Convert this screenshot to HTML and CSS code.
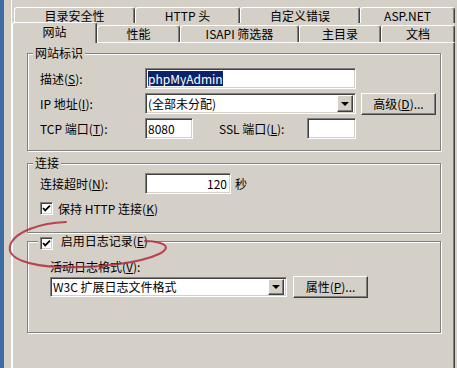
FILE: index.html
```html
<!DOCTYPE html>
<html lang="zh-CN">
<head>
  <meta charset="UTF-8" />
  <title>网站属性</title>
  <link rel="stylesheet" href="styles.css">
</head>
<body>

  <div class="edge"></div>

  <div class="dialog">
    <!-- back row of tabs -->
    <div class="tabs tabs-back">
      <div class="tab t-security">目录安全性</div>
      <div class="tab t-http">HTTP 头</div>
      <div class="tab t-errors">自定义错误</div>
      <div class="tab t-asp">ASP.NET</div>
    </div>

    <!-- front row of tabs -->
    <div class="tabs tabs-front">
      <div class="tab active t-site">网站</div>
      <div class="tab t-perf">性能</div>
      <div class="tab t-isapi">ISAPI 筛选器</div>
      <div class="tab t-home">主目录</div>
      <div class="tab t-docs">文档</div>
    </div>

    <div class="panel">

      <fieldset class="group g-site">
        <legend class="legend-text">网站标识</legend>
        <div class="row">
          <span class="lbl">描述(<u>S</u>):</span>
          <div class="field w-desc"><span class="sel">phpMyAdmin</span></div>
        </div>
        <div class="row">
          <span class="lbl">IP 地址(<u>I</u>):</span>
          <div class="field select w-desc">
            <span>(全部未分配)</span>
            <span class="dd"></span>
          </div>
          <div class="btn w-btn ml5">高级(<u>D</u>)...</div>
        </div>
        <div class="row">
          <span class="lbl">TCP 端口(<u>T</u>):</span>
          <div class="field w-tcp">8080</div>
          <span class="lbl-ssl">SSL 端口(<u>L</u>):</span>
          <div class="field w-ssl"></div>
        </div>
      </fieldset>

      <fieldset class="group g-conn">
        <legend class="legend-text">连接</legend>
        <div class="row">
          <span class="lbl">连接超时(<u>N</u>):</span>
          <div class="field num w-timeout">120</div>
          <span class="unit">秒</span>
        </div>
        <div class="row">
          <span class="check"><svg width="9" height="9" viewBox="0 0 9 9"><path d="M1 4 L3.2 6.4 L8 1.6" fill="none" stroke="#000" stroke-width="1.7"/></svg></span>
          <span class="check-text">保持 HTTP 连接(<u>K</u>)</span>
        </div>
      </fieldset>

      <fieldset class="group g-log">
        <legend class="legend-check">
          <span class="check"><svg width="9" height="9" viewBox="0 0 9 9"><path d="M1 4 L3.2 6.4 L8 1.6" fill="none" stroke="#000" stroke-width="1.7"/></svg></span>
          <span class="check-text">启用日志记录(<u>E</u>)</span>
        </legend>
        <div class="log-label">活动日志格式(<u>V</u>):</div>
        <div class="log-row">
          <div class="field select w-format">
            <span>W3C 扩展日志文件格式</span>
            <span class="dd"></span>
          </div>
          <div class="btn w-btn">属性(<u>P</u>)...</div>
        </div>
      </fieldset>

    </div>
  </div>

  <!-- hand-drawn red circle over the screenshot -->
  <svg class="mark" width="457" height="368" viewBox="0 0 457 368">
    <path d="M66 222 C42 223 14 231 10 246 C7 259 30 266 60 267 C100 268 140 263 159 254 C171 248 168 242 145 241"
          fill="none" stroke="#b42a3a" stroke-width="2" stroke-linecap="round" opacity="0.85"/>
  </svg>

</body>
</html>
```

FILE: styles.css
```css
* { box-sizing: border-box; }

body {
  margin: 0;
  height: 368px;
  overflow: hidden;
  display: flex;
  background: #d4d0c8;
  color: #000;
  font-family: "Noto Sans CJK SC", "Liberation Sans", sans-serif;
  font-size: 12px;
}

u { text-decoration: underline; text-underline-offset: 1px; }

.edge {
  width: 4px;
  margin-right: 7px;
  background: #3d6ca4;
  flex: none;
}

.dialog {
  flex: 1;
  min-width: 0;
  display: flex;
  flex-direction: column;
  padding-top: 7px;
  border-left: 1px solid #fff;
}

/* tabs */
.tabs { display: flex; flex: none; }

.tabs-back {
  height: 16px;
  padding-left: 2px;
}

.tabs-front {
  height: 20px;
  margin-top: -1px;
  align-items: flex-end;
}

.tab {
  height: 16px;
  display: flex;
  align-items: center;
  justify-content: center;
  line-height: 14px;
  background: #d4d0c8;
  border-top: 1px solid #fff;
  border-left: 1px solid #fff;
  border-right: 1px solid #404040;
  border-radius: 3px 3px 0 0;
  box-shadow: inset -1px 0 #808080;
  white-space: nowrap;
}

.tabs-front .tab { height: 17px; }

.tabs-front .tab.active {
  height: 21px;
  margin-bottom: -1px;
  padding-bottom: 3px;
  position: relative;
  z-index: 1;
}

.t-security { width: 121px; }
.t-http { width: 105px; }
.t-errors { width: 120px; }
.t-asp { width: 95px; }
.t-site { width: 85px; }
.t-perf { width: 83px; }
.t-isapi { width: 119px; }
.t-home { width: 82px; }
.t-docs { width: 74px; }

/* main page */
.panel {
  flex: 1;
  min-width: 0;
  margin-right: 2px;
  padding: 3px 13px 0 14px;
  border-top: 1px solid #fff;
  border-left: 1px solid #fff;
  border-right: 1px solid #404040;
  box-shadow: inset -1px 0 #808080;
}

.group {
  margin: 0;
  min-width: 0;
  border: 1px solid #808080;
  box-shadow: inset 1px 1px #fff, 1px 1px #fff;
}

.g-site { padding: 8px 0 11px 12px; }
.g-conn { margin-top: 5px; padding: 3px 0 13px 12px; }
.g-log { margin-top: 1px; padding: 12px 0 34px 12px; }

.legend-text {
  margin-left: -7px;
  padding: 0 2px;
  line-height: 14px;
  background: #d4d0c8;
}

.legend-check {
  margin-left: -2px;
  padding: 0 2px;
  height: 14px;
  line-height: 14px;
  background: #d4d0c8;
}

.legend-check .check { vertical-align: -2px; }

.row {
  display: flex;
  align-items: center;
  height: 21px;
  white-space: nowrap;
}

.row + .row { margin-top: 4px; }

.lbl { width: 105px; flex: none; }

.lbl-ssl {
  width: 88px;
  margin-left: 26px;
  flex: none;
}

/* sunken edit box */
.field {
  height: 21px;
  display: flex;
  align-items: center;
  padding: 0 3px 0 2px;
  background: #fff;
  border-top: 1px solid #808080;
  border-left: 1px solid #808080;
  border-bottom: 1px solid #fff;
  border-right: 1px solid #fff;
  box-shadow: inset 1px 1px #404040, inset -1px -1px #d4d0c8;
  white-space: nowrap;
  flex: none;
}

.field.num { justify-content: flex-end; }
.field.select { padding-right: 2px; }

.sel {
  background: #0a246a;
  color: #fff;
  line-height: 15px;
}

.w-desc { width: 211px; }
.w-tcp { width: 48px; }
.w-ssl { width: 49px; }
.w-timeout { width: 86px; }
.w-format { width: 237px; height: 20px; }

.unit { margin-left: 4px; }

/* dropdown arrow button */
.dd {
  margin-left: auto;
  width: 16px;
  height: 17px;
  display: inline-flex;
  align-items: center;
  justify-content: center;
  background: #d4d0c8;
  border-top: 1px solid #fff;
  border-left: 1px solid #fff;
  border-bottom: 1px solid #404040;
  border-right: 1px solid #404040;
  box-shadow: inset -1px -1px #808080;
}

.w-format .dd { height: 16px; }

.dd::after {
  content: "";
  border-left: 4px solid transparent;
  border-right: 4px solid transparent;
  border-top: 4px solid #000;
}

/* raised push button */
.btn {
  height: 22px;
  display: flex;
  align-items: center;
  justify-content: center;
  background: #d4d0c8;
  border-top: 1px solid #fff;
  border-left: 1px solid #fff;
  border-bottom: 1px solid #404040;
  border-right: 1px solid #404040;
  box-shadow: inset -1px -1px #808080;
  white-space: nowrap;
  flex: none;
}

.w-btn { width: 75px; }
.ml5 { margin-left: 5px; }

/* checkbox */
.check {
  width: 13px;
  height: 13px;
  display: inline-flex;
  align-items: center;
  justify-content: center;
  background: #fff;
  border-top: 1px solid #808080;
  border-left: 1px solid #808080;
  border-bottom: 1px solid #fff;
  border-right: 1px solid #fff;
  box-shadow: inset 1px 1px #404040, inset -1px -1px #d4d0c8;
  flex: none;
}

.check-text { margin-left: 5px; }

.log-label {
  margin: 0 0 1px 10px;
  line-height: 14px;
}

.log-row {
  display: flex;
  align-items: center;
  height: 23px;
  margin-left: 10px;
  gap: 6px;
}

.mark {
  position: absolute;
  top: 0;
  left: 0;
  pointer-events: none;
}
```
